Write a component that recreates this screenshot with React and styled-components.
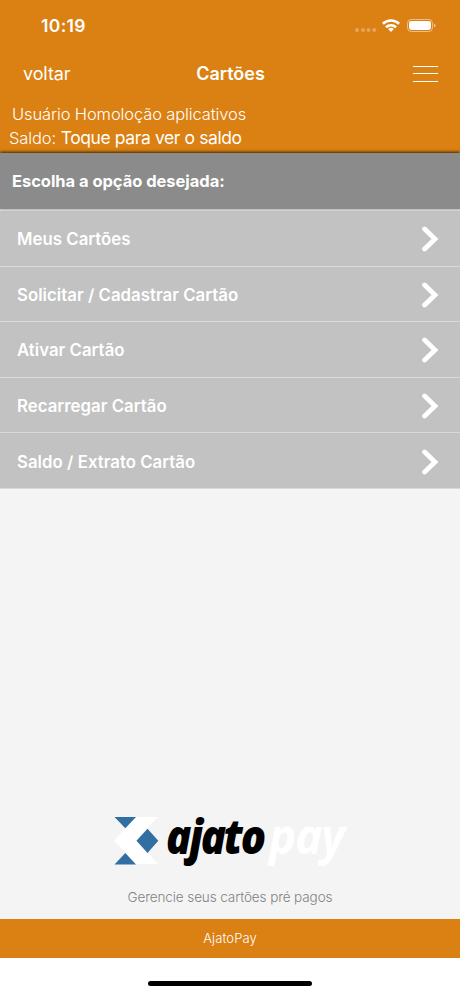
import React from 'react';
import styled, { createGlobalStyle } from 'styled-components';

const GlobalStyle = createGlobalStyle`
  body {
    margin: 0;
    background: #fff;
    font-family: Inter, 'Liberation Sans', sans-serif;
  }
`;

const Screen = styled.div`
  display: flex;
  flex-direction: column;
  width: 460px;
  height: 996px;
  overflow: hidden;
  background: #f4f4f4;
`;

const StatusBar = styled.div`
  display: flex;
  align-items: center;
  justify-content: space-between;
  height: 50px;
  padding: 0 24px 0 41px;
  box-sizing: border-box;
  background: #db8012;
`;

const Clock = styled.span`
  padding-top: 1px;
  color: #fff;
  font-size: 17.5px;
  font-weight: 600;
  letter-spacing: 0.35px;
`;

const NavBar = styled.header`
  display: grid;
  grid-template-columns: 1fr auto 1fr;
  align-items: center;
  height: 48px;
  padding: 0 22px 1px 23px;
  box-sizing: border-box;
  background: #db8012;
  color: #fff;
`;

const BackLink = styled.span`
  font-size: 18px;
  font-weight: 400;
  letter-spacing: -0.1px;
`;

const Title = styled.h1`
  margin: 0;
  font-size: 18px;
  font-weight: 600;
  letter-spacing: 0;
`;

const MenuIcon = styled.svg`
  justify-self: end;
`;

const UserInfo = styled.div`
  height: 55px;
  padding: 4px 0 2px 9px;
  box-sizing: border-box;
  background: #db8012;
  color: #fff;
`;

const UserName = styled.p`
  margin: 0 0 0 3px;
  font-size: 16.5px;
  line-height: 24px;
  font-weight: 350;
  letter-spacing: -0.12px;
`;

const Balance = styled.p`
  margin: 0;
  font-size: 16.5px;
  line-height: 23px;
  font-weight: 350;
  letter-spacing: -0.1px;
`;

const BalanceAction = styled.span`
  font-size: 17.5px;
  font-weight: 400;
  letter-spacing: -0.4px;
`;

const SectionHeading = styled.h2`
  position: relative;
  height: 56px;
  margin: 0 0 2px;
  padding-left: 12px;
  background: #8b8b8b;
  box-shadow: 0 -1px 3px rgba(0, 0, 0, 0.75), 0 2px 0 #dcdcdc;
  color: #fff;
  font-size: 16.5px;
  font-weight: 700;
  line-height: 57px;
  letter-spacing: -0.04px;
`;

const OptionList = styled.ul`
  margin: 0;
  padding: 0;
  background: #c2c2c2;
  list-style: none;
`;

const OptionItem = styled.li`
  display: flex;
  align-items: center;
  justify-content: space-between;
  height: 55.6px;
  padding: 2px 21px 0 17px;
  box-sizing: border-box;
  border-bottom: 1px solid #d9d9d9;
  background: #c2c2c2;
  color: #fff;
  font-size: 16.8px;
  font-weight: 600;
  letter-spacing: 0.03px;
`;

const Branding = styled.div`
  display: flex;
  flex: 1;
  flex-direction: column;
  align-items: center;
  justify-content: flex-end;
`;

const LogoText = styled.text`
  font-family: 'Open Sans', sans-serif;
  font-size: 48px;
  font-style: italic;
  font-weight: ${props => props.$weight};
  letter-spacing: ${props => props.$spacing}px;
`;

const Tagline = styled.p`
  margin: 13px 0 0;
  height: 34px;
  color: #828282;
  font-size: 13.5px;
  font-weight: 350;
  line-height: 24px;
  letter-spacing: -0.1px;
`;

const Footer = styled.footer`
  height: 39px;
  background: #db8012;
  color: #fff;
  font-size: 13px;
  font-weight: 300;
  line-height: 39px;
  letter-spacing: 0.1px;
  text-align: center;
`;

const HomeArea = styled.div`
  display: flex;
  justify-content: center;
  height: 38px;
  background: #fff;
`;

const HomeIndicator = styled.div`
  width: 164px;
  height: 5px;
  margin-top: 23px;
  border-radius: 3px;
  background: #000;
`;

const options = [
  'Meus Cartões',
  'Solicitar / Cadastrar Cartão',
  'Ativar Cartão',
  'Recarregar Cartão',
  'Saldo / Extrato Cartão',
];

function StatusIcons() {
  return (
    <svg width="82" height="20" viewBox="354 15 82 20">
      <g fill="#fff" fillOpacity="0.3">
        <circle cx="357" cy="30" r="2" />
        <circle cx="363" cy="30" r="2" />
        <circle cx="368.5" cy="30" r="2" />
        <circle cx="374.2" cy="30" r="2" />
      </g>
      <g fill="none" stroke="#fff" strokeWidth="2.6">
        <path d="M382.9 23.8a11.6 11.6 0 0 1 16.2 0" />
        <path d="M386 27.2a7.2 7.2 0 0 1 10 0" />
      </g>
      <path d="M391 32l-2.8-2.9a4 4 0 0 1 5.6 0z" fill="#fff" />
      <rect x="407.5" y="19.5" width="25" height="12" rx="3.8" fill="none" stroke="#fff" strokeOpacity="0.5" />
      <rect x="409" y="21" width="22" height="9" rx="2.4" fill="#fff" />
      <path d="M434 23.5q1.6 .6 1.6 2t-1.6 2z" fill="#fff" fillOpacity="0.55" />
    </svg>
  );
}

function Chevron() {
  return (
    <svg width="18" height="26" viewBox="0 0 18 26">
      <path d="M3.6 3l10.4 10-10.4 10" fill="none" stroke="#fff" strokeWidth="4.8" strokeLinecap="round" strokeLinejoin="miter" />
    </svg>
  );
}

function Logo() {
  return (
    <svg width="240" height="60" viewBox="110 812 240 60" overflow="visible">
      <path d="M136 817h22l-22 23.5 22 23.5h-22l-22-23.5z" fill="#fff" />
      <path d="M114.5 817H136l-10.7 11.3zM114.5 864.5H136l-10.7-11.5zM136.5 840.8l11-12 10.8 12-10.8 12.2z" fill="#316fa3" />
      <LogoText $weight={800} $spacing={-2.5} x="166" y="853.5" textLength="98" lengthAdjust="spacingAndGlyphs" fill="#000">ajato</LogoText>
      <LogoText $weight={700} $spacing={-1} x="269" y="853.5" textLength="75" lengthAdjust="spacingAndGlyphs" fill="#fff">pay</LogoText>
    </svg>
  );
}

export default function App() {
  return (
    <>
      <GlobalStyle />
      <Screen>
        <StatusBar>
          <Clock>10:19</Clock>
          <StatusIcons />
        </StatusBar>
        <NavBar>
          <BackLink>voltar</BackLink>
          <Title>Cartões</Title>
          <MenuIcon width="25" height="18" viewBox="0 0 25 18">
            <path d="M0 1.5h25M0 8.5h25M0 16.5h25" stroke="#fff" strokeWidth="1.1" />
          </MenuIcon>
        </NavBar>
        <UserInfo>
          <UserName>Usuário Homoloção aplicativos</UserName>
          <Balance>
            Saldo: <BalanceAction>Toque para ver o saldo</BalanceAction>
          </Balance>
        </UserInfo>
        <SectionHeading>Escolha a opção desejada:</SectionHeading>
        <OptionList>
          {options.map(option => (
            <OptionItem key={option}>
              {option}
              <Chevron />
            </OptionItem>
          ))}
        </OptionList>
        <Branding>
          <Logo />
          <Tagline>Gerencie seus cartões pré pagos</Tagline>
        </Branding>
        <Footer>AjatoPay</Footer>
        <HomeArea>
          <HomeIndicator />
        </HomeArea>
      </Screen>
    </>
  );
}
